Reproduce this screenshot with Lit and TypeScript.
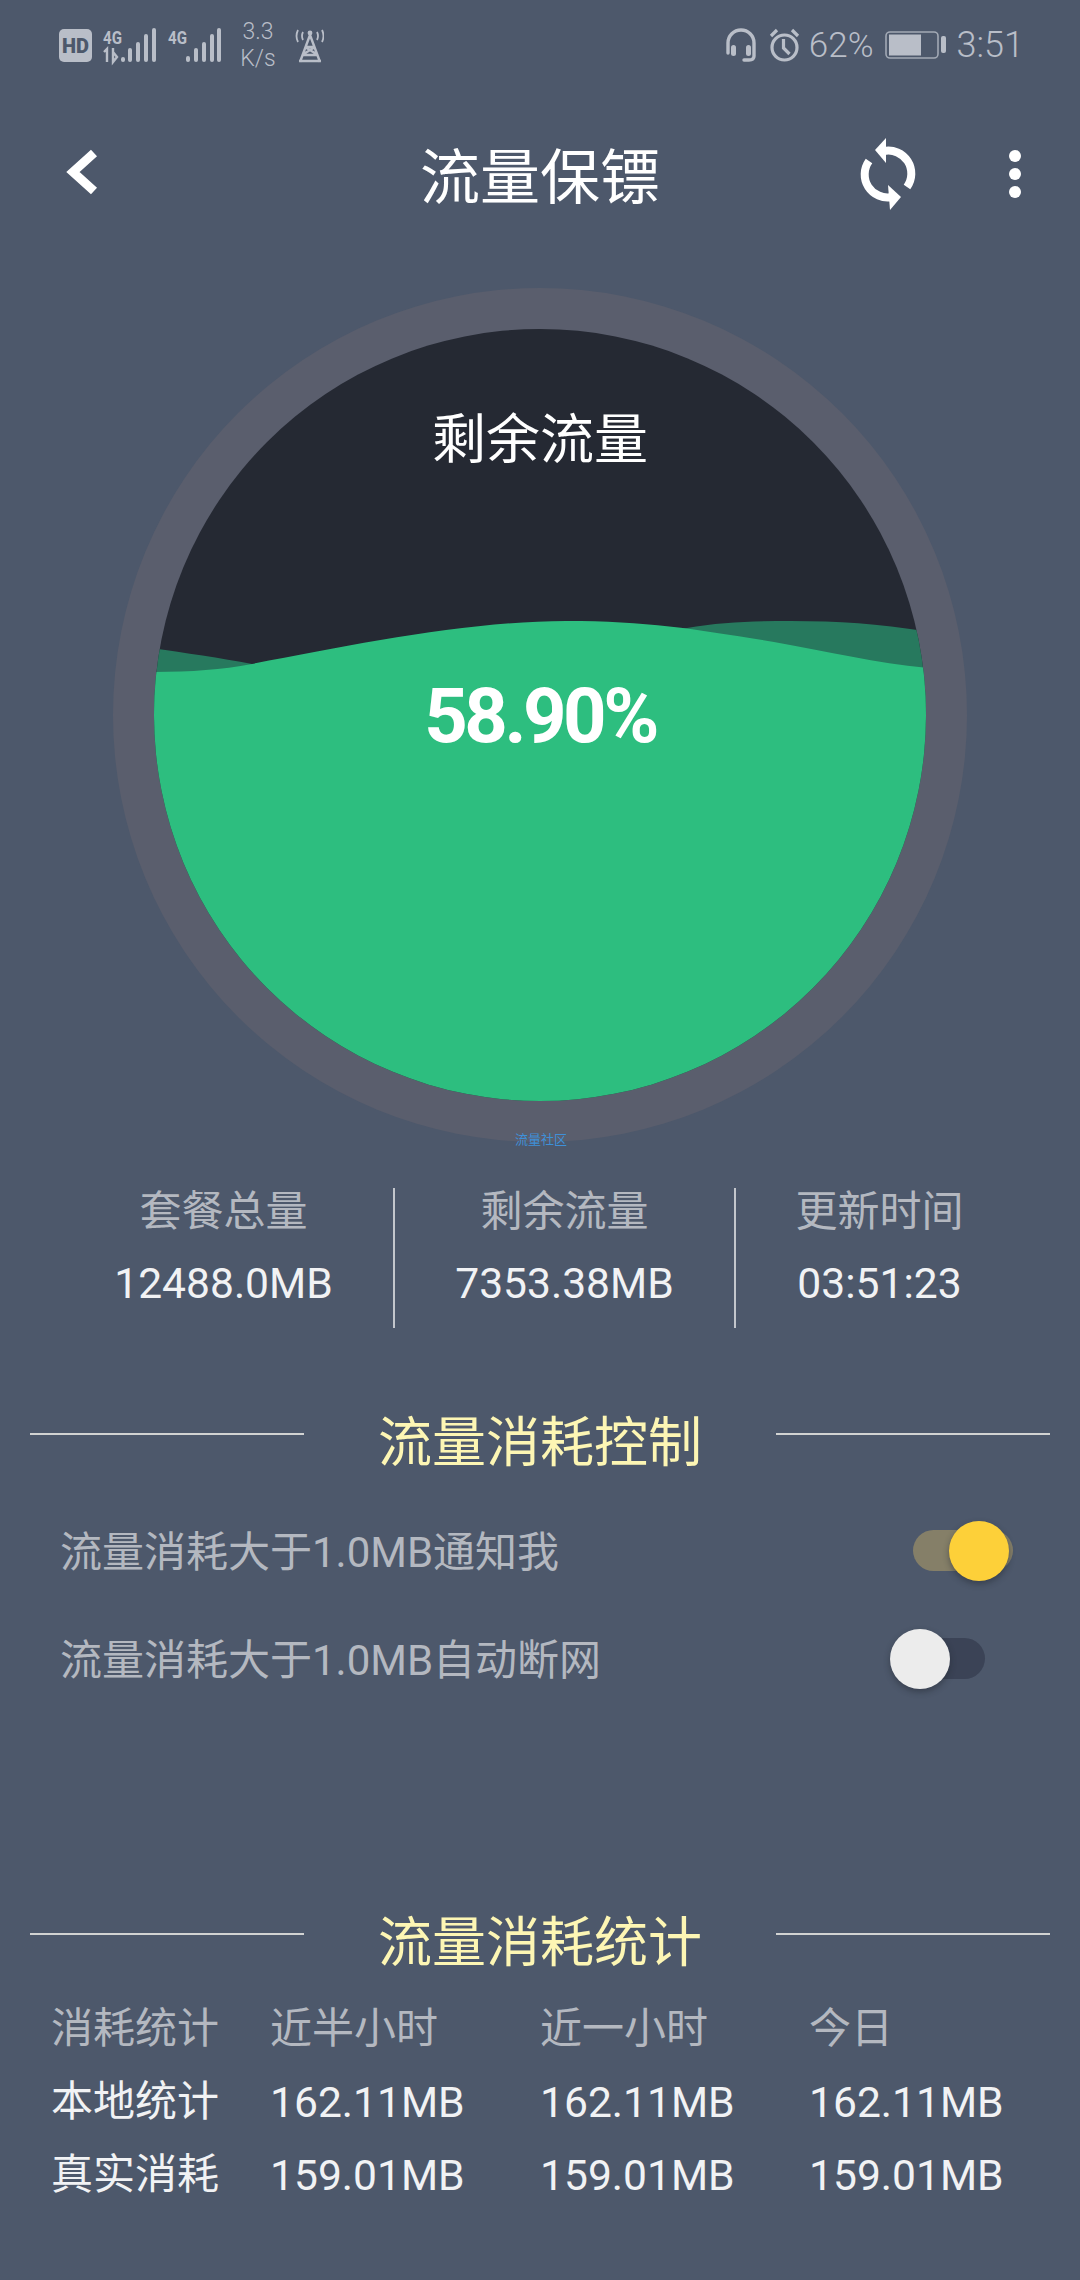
import { LitElement, html, css, svg } from "lit";
import { customElement } from "lit/decorators.js";

const bars = (xs: number[], tops: number[]) =>
  xs.map(
    (x, i) =>
      svg`<rect x=${x - 2} y=${tops[i]} width="4" height=${62 - tops[i]} rx="2" fill="#b9bec8"/>`
  );

const fourG = (x: number) =>
  svg`<text x=${x} y="44" font-family="Roboto" font-weight="700" font-size="19" textLength="19" lengthAdjust="spacingAndGlyphs" fill="#b9bec8">4G</text>`;

const leftStatus = svg`
  <rect x="59" y="29" width="33" height="33" rx="5" fill="#b9bec8"/>
  <text x="75.5" y="53" text-anchor="middle" font-family="Roboto" font-weight="900" font-size="20" fill="#4d586b">HD</text>
  ${fourG(103)}
  <path d="M104 52l3-3v13M113 48v14l4-5-4-5" fill="none" stroke="#b9bec8" stroke-width="2.4"/>
  ${bars([123, 130, 138, 146, 154], [57, 48, 42, 34, 28])}
  ${fourG(168)}
  ${bars([188, 196, 204, 212, 219], [56, 48, 42, 34, 28])}
  <g transform="translate(296 29)" fill="none" stroke="#b9bec8" stroke-width="2.4">
    <path d="M14 6 4 33M14 6 24 33M9 18H19M6 26H22M9 18 22 26M19 18 6 26M3 32H25"/>
    <path d="M7 3Q5 7 7 11M21 3Q23 7 21 11M2 1Q-1 7 2 13M26 1Q29 7 26 13" stroke-width="1.8"/>
    <circle cx="14" cy="4" r="2.4" fill="#b9bec8" stroke="none"/>
  </g>`;

@customElement("app-root")
export class AppRoot extends LitElement {
  static styles = css`
    :host {
      display: block;
      width: 1080px;
      height: 2280px;
      overflow: hidden;
      background: #4d586b;
      font-family: Roboto, "Noto Sans CJK SC", sans-serif;
      color: #b4b8c0;
      font-size: 42px;
    }
    .status {
      height: 90px;
      padding: 0 56px 0 59px;
      display: flex;
      justify-content: space-between;
      align-items: center;
      color: #b9bec8;
      position: relative;
    }
    .status-left { display: flex; align-items: center; }
    .status-right { display: flex; align-items: center; }
    .net {
      position: absolute;
      left: 239px;
      top: 18px;
      font-size: 23px;
      line-height: 27px;
      font-weight: 300;
      text-align: center;
      width: 38px;
    }
    .pct { font-size: 35px; margin: 0 11px 0 8px; line-height: 1; font-weight: 300; }
    .clock { font-size: 36px; margin-left: 11px; line-height: 1; font-weight: 300; }
    .ic { display: block; }
    .ml { margin-left: 11px; }
    .bar {
      position: relative;
      height: 172px;
      display: flex;
      align-items: center;
      justify-content: center;
    }
    .bar h1 {
      margin: 6px 0 0;
      font-size: 60px;
      font-weight: 400;
      color: #fff;
      line-height: 1;
    }
    .bar svg { position: absolute; top: 0; left: 0; }
    .hero {
      position: relative;
      width: 854px;
      height: 854px;
      margin: 26px auto 0;
    }
    .hero svg { display: block; }
    .remain {
      position: absolute;
      left: 0; right: 0;
      top: 122px;
      text-align: center;
      color: #fff;
      font-size: 54px;
      line-height: 62px;
    }
    .percent {
      position: absolute;
      left: 0; right: 0;
      top: 383px;
      text-align: center;
      color: #fff;
      font-size: 76px;
      font-weight: 700;
      line-height: 90px;
      letter-spacing: -3.5px;
    }
    .wm {
      position: absolute;
      left: 2px; right: 0;
      top: 844px;
      text-align: center;
      color: #3f90d8;
      font-size: 13px;
      line-height: 16px;
    }
    .stats {
      display: grid;
      grid-template-columns: 341px 341px 287px;
      margin: 46px 0 0 54px;
      height: 140px;
    }
    .stat {
      display: flex;
      flex-direction: column;
      align-items: center;
      justify-content: flex-start;
      padding-top: 1px;
      box-sizing: border-box;
      border-right: 2px solid #c3c6cc;
    }
    .stat:last-child { border-right: 0; }
    .stat .k { line-height: 46px; height: 46px; }
    .stat .v {
      line-height: 46px;
      height: 46px;
      color: #f1f2f4;
      margin-top: 25px;
      font-size: 42.6px;
    }
    .section {
      display: grid;
      grid-template-columns: 274px 1fr 274px;
      align-items: start;
      padding: 0 30px;
      height: 62px;
      color: #fdf6b4;
      font-size: 54px;
      line-height: 62px;
      text-align: center;
    }
    .section i { display: block; height: 2px; background: #d2d3d2; margin-top: 20px; }
    .s1 { margin-top: 85px; }
    .s2 { margin-top: 222px; }
    .row {
      position: relative;
      height: 60px;
      line-height: 60px;
      padding-left: 60px;
    }
    .r1 { margin-top: 48px; }
    .r2 { margin-top: 48px; }
    .track {
      position: absolute;
      height: 41px;
      border-radius: 21px;
      top: 7px;
    }
    .knob {
      position: absolute;
      width: 60px;
      height: 60px;
      border-radius: 50%;
      top: -2px;
      box-shadow: 0 3px 6px rgba(30, 35, 45, 0.45);
    }
    .t-on { left: 913px; width: 100px; background: #857f68; }
    .k-on { left: 949px; background: #fdd039; }
    .t-off { left: 900px; width: 85px; background: #3b4356; }
    .k-off { left: 890px; background: #ececec; }
    .table {
      display: grid;
      grid-template-columns: 219px 270px 269px 1fr;
      padding-left: 51px;
      margin-top: 24px;
      grid-auto-rows: 73px;
      line-height: 60px;
      white-space: nowrap;
    }
    .table .n { font-size: 42.6px; }
    .w { color: #f1f2f4; }
  `;

  render() {
    return html`
      <div class="status">
        <div class="status-left">
          <svg class="ic" width="265" height="46" viewBox="59 22 265 46">${leftStatus}</svg>
          <div class="net">3.3<br />K/s</div>
        </div>
        <div class="status-right">
          <svg class="ic" width="32" height="34" viewBox="0 0 32 34" fill="none" stroke="#b9bec8" stroke-width="3.4">
            <path d="M3 25V15a13 13 0 0 1 26 0v13q0 4-5 4h-5" stroke-linecap="round" />
            <rect x="6" y="17" width="5" height="11" rx="2.5" fill="#b9bec8" stroke="none" />
            <rect x="21" y="17" width="5" height="11" rx="2.5" fill="#b9bec8" stroke="none" />
          </svg>
          <svg class="ic ml" width="33" height="34" viewBox="0 0 33 34" fill="none" stroke="#b9bec8" stroke-width="3.2">
            <circle cx="16.5" cy="19.5" r="12.5" />
            <path d="M15.5 11v9l6 6M3 8l6-6M30 8l-6-6" />
          </svg>
          <span class="pct">62%</span>
          <svg class="ic" width="61" height="28" viewBox="0 0 61 28">
            <rect x="1" y="1" width="52" height="26" rx="4" fill="none" stroke="#a2a9b5" stroke-width="1.6" />
            <rect x="4" y="3.500" width="32" height="21" fill="#b9bec8" />
            <rect x="56" y="5" width="5" height="17" rx="2" fill="#b9bec8" />
          </svg>
          <span class="clock">3:51</span>
        </div>
      </div>

      <div class="bar">
        <svg width="1080" height="172" viewBox="0 90 1080 172">
          <polyline points="94,153 73,172 94,191" fill="none" stroke="#fff" stroke-width="9" />
          <g fill="none" stroke="#fff" stroke-width="8">
            <path d="M884 151A23 23 0 0 1 907 187" />
            <path d="M892 197A23 23 0 0 1 869 161" />
          </g>
          <polygon points="886,138 875,150 886,163" fill="#fff" />
          <polygon points="890,210 901,197 888,185" fill="#fff" />
          <circle cx="1015" cy="156" r="6" fill="#fff" />
          <circle cx="1015" cy="174" r="6" fill="#fff" />
          <circle cx="1015" cy="192" r="6" fill="#fff" />
        </svg>
        <h1>流量保镖</h1>
      </div>

      <div class="hero">
        <svg width="854" height="854" viewBox="113 288 854 854">
          <defs><clipPath id="c"><circle cx="540" cy="715" r="386" /></clipPath></defs>
          <circle cx="540" cy="715" r="427" fill="#5a5e6d" />
          <circle cx="540" cy="715" r="386" fill="#252933" />
          <g clip-path="url(#c)">
            <path d="M150 648C180 652 220 658 252 664L687 628C720 622 755 621 791 621C840 621 880 624 930 632V720H150Z" fill="#27795e" />
            <path d="M150 672C190 672 220 670 252 664C350 645 470 621 566 621C650 621 700 630 774 642C830 652 880 664 930 668V1110H150Z" fill="#2dbe7f" />
          </g>
        </svg>
        <div class="remain">剩余流量</div>
        <div class="percent">58.90%</div>
        <div class="wm">流量社区</div>
      </div>

      <div class="stats">
        <div class="stat"><span class="k">套餐总量</span><span class="v">12488.0MB</span></div>
        <div class="stat"><span class="k">剩余流量</span><span class="v">7353.38MB</span></div>
        <div class="stat"><span class="k">更新时间</span><span class="v">03:51:23</span></div>
      </div>

      <div class="section s1"><i></i><span>流量消耗控制</span><i></i></div>
      <div class="row r1">
        流量消耗大于1.0MB通知我
        <div class="track t-on"></div>
        <div class="knob k-on"></div>
      </div>
      <div class="row r2">
        流量消耗大于1.0MB自动断网
        <div class="track t-off"></div>
        <div class="knob k-off"></div>
      </div>

      <div class="section s2"><i></i><span>流量消耗统计</span><i></i></div>
      <div class="table">
        <span>消耗统计</span><span>近半小时</span><span>近一小时</span><span>今日</span>
        <span class="w">本地统计</span><span class="w n">162.11MB</span><span class="w n">162.11MB</span><span class="w n">162.11MB</span>
        <span class="w">真实消耗</span><span class="w n">159.01MB</span><span class="w n">159.01MB</span><span class="w n">159.01MB</span>
      </div>
    `;
  }
}
